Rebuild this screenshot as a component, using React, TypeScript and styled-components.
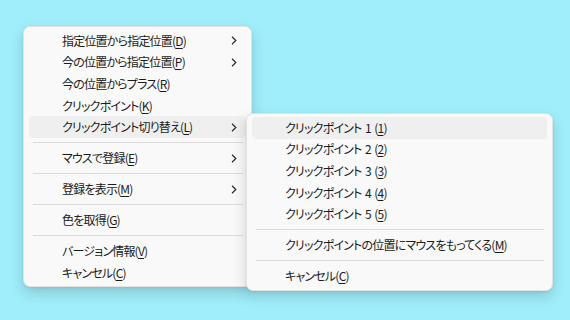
import * as React from 'react';
import styled, { createGlobalStyle } from 'styled-components';

const GlobalStyle = createGlobalStyle`
    html, body {
        margin: 0;
        padding: 0;
        width: 570px;
        height: 320px;
        overflow: hidden;
        background: #a0eefb;
    }
`;

const Desktop = styled.div`
    position: relative;
    width: 570px;
    height: 320px;
    font-family: "Noto Sans CJK JP", "Noto Sans", sans-serif;
    font-size: 12px;
    font-feature-settings: "palt";
    letter-spacing: -0.8px;
    word-spacing: 1.6px;
    color: #1b1b1b;
`;

const Menu = styled.div<{ $left: number; $top: number; $width: number }>`
    position: absolute;
    left: ${p => p.$left}px;
    top: ${p => p.$top}px;
    width: ${p => p.$width}px;
    box-sizing: border-box;
    padding: 3px 0;
    background: #f9f9f9;
    border: 1px solid #e3e3e3;
    border-radius: 7px;
    box-shadow: 0 6px 14px rgba(0, 0, 0, 0.16), 0 1px 3px rgba(0, 0, 0, 0.08);
    display: flex;
    flex-direction: column;
`;

const Item = styled.div<{ $active?: boolean }>`
    display: flex;
    align-items: center;
    height: 21.6px;
    margin: 0 5px;
    padding: 0 9px 0 33px;
    border-radius: 4px;
    background: ${p => (p.$active ? '#efefef' : 'transparent')};
    white-space: nowrap;
`;

const Label = styled.span`
    flex: 1;
    line-height: 1;
`;

const Key = styled.span`
    text-decoration: underline;
    text-underline-offset: 2px;
`;

const Separator = styled.div`
    height: 1px;
    margin: 4.2px 8px 4.2px 9px;
    background: #dadada;
`;

const Chevron = () => (
    <svg width="6" height="9" viewBox="0 0 6 9">
        <polyline points="1,0.8 4.8,4.5 1,8.2" fill="none" stroke="#2a2a2a" strokeWidth="1.2" />
    </svg>
);

type Entry = { pre: string; k: string; post: string; sub?: boolean; active?: boolean } | 'sep';

const mainItems: Entry[] = [
    { pre: '指定位置から指定位置(', k: 'D', post: ')', sub: true },
    { pre: '今の位置から指定位置(', k: 'P', post: ')', sub: true },
    { pre: '今の位置からプラス(', k: 'R', post: ')' },
    { pre: 'クリックポイント(', k: 'K', post: ')' },
    { pre: 'クリックポイント切り替え(', k: 'L', post: ')', sub: true, active: true },
    'sep',
    { pre: 'マウスで登録(', k: 'E', post: ')', sub: true },
    'sep',
    { pre: '登録を表示(', k: 'M', post: ')', sub: true },
    'sep',
    { pre: '色を取得(', k: 'G', post: ')' },
    'sep',
    { pre: 'バージョン情報(', k: 'V', post: ')' },
    { pre: 'キャンセル(', k: 'C', post: ')' },
];

const subItems: Entry[] = [
    { pre: 'クリックポイント 1 (', k: '1', post: ')', active: true },
    { pre: 'クリックポイント 2 (', k: '2', post: ')' },
    { pre: 'クリックポイント 3 (', k: '3', post: ')' },
    { pre: 'クリックポイント 4 (', k: '4', post: ')' },
    { pre: 'クリックポイント 5 (', k: '5', post: ')' },
    'sep',
    { pre: 'クリックポイントの位置にマウスをもってくる(', k: 'M', post: ')' },
    'sep',
    { pre: 'キャンセル(', k: 'C', post: ')' },
];

const renderItems = (items: Entry[]) =>
    items.map((it, i) =>
        it === 'sep' ? (
            <Separator key={i} />
        ) : (
            <Item key={i} $active={it.active}>
                <Label>
                    {it.pre}
                    <Key>{it.k}</Key>
                    {it.post}
                </Label>
                {it.sub && <Chevron />}
            </Item>
        )
    );

export default () => (
    <Desktop>
        <GlobalStyle />
        <Menu $left={23} $top={26} $width={229}>
            {renderItems(mainItems)}
        </Menu>
        <Menu $left={246} $top={113} $width={307}>
            {renderItems(subItems)}
        </Menu>
    </Desktop>
);
